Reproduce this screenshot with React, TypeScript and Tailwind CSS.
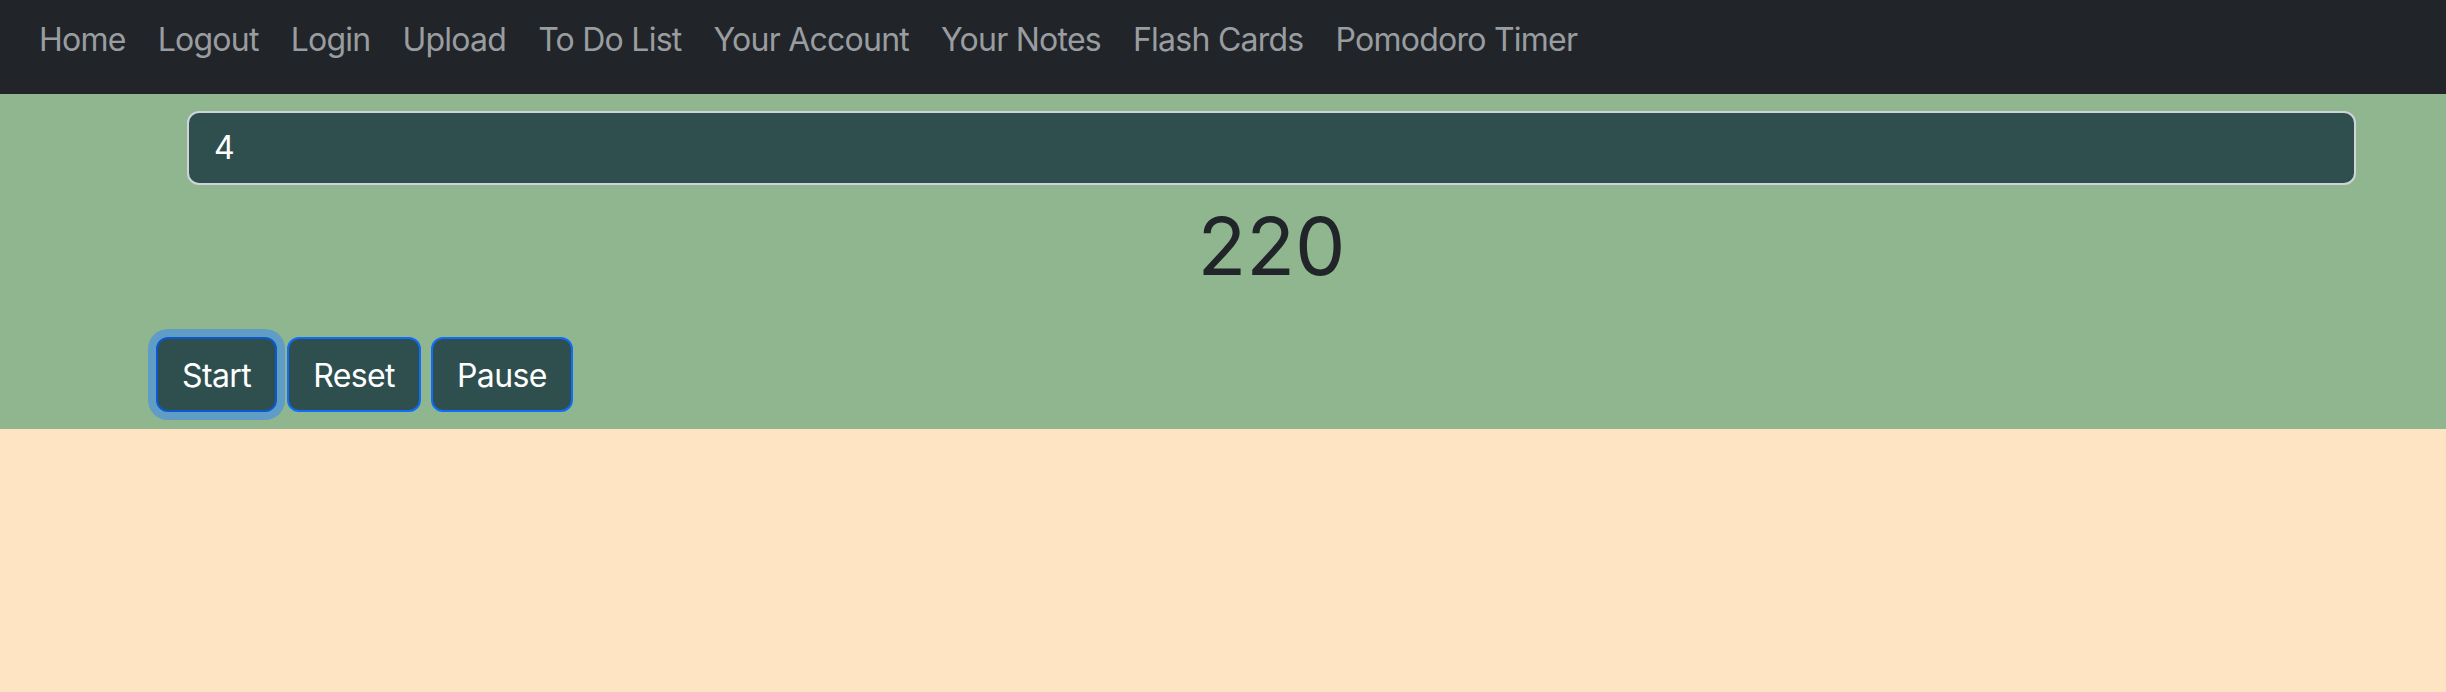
import React from "react";

const links = ["Home", "Logout", "Login", "Upload", "To Do List", "Your Account", "Your Notes", "Flash Cards", "Pomodoro Timer"];

export default function App() {
  return (
    <div className="min-h-[692px] bg-[#ffe4c4]" style={{ fontFamily: "Inter, 'Noto Sans', sans-serif" }}>
      {/* navbar */}
      <nav className="flex h-[94px] items-start bg-[#212529] pl-[23px] pt-[16px]">
        {links.map((l) => (
          <a key={l} className="px-[16px] text-[32px] leading-[48px] tracking-[-0.75px] text-[#9a9da0]">
            {l}
          </a>
        ))}
      </nav>

      {/* timer */}
      <div className="flex flex-col bg-[#8fb68e] pb-[17px] pt-[17px]">
        <div className="ml-[187px] flex h-[74px] w-[2169px] items-center rounded-[12px] border-2 border-[#ced4da] bg-[#2f4f4f] px-[25px] text-[32px] text-white">
          4
        </div>
        <div className="ml-[187px] mt-[13px] w-[2169px] text-center text-[80px] leading-[96px] text-[#212529]">220</div>
        <div className="ml-[156px] mt-[43px] flex gap-[9px]">
          <button className="h-[75px] rounded-[12px] border-2 border-[#0a58ca] bg-[#2f4f4f] px-[24px] pt-[2px] text-[32px] tracking-[-0.6px] text-white shadow-[0_0_0_8px_rgba(49,132,253,0.5)]">
            Start
          </button>
          <button className="ml-[1px] h-[75px] rounded-[12px] border-2 border-[#0d6efd] bg-[#2f4f4f] px-[24px] pt-[2px] text-[32px] tracking-[-0.6px] text-white">
            Reset
          </button>
          <button className="ml-[1px] h-[75px] rounded-[12px] border-2 border-[#0d6efd] bg-[#2f4f4f] px-[24px] pt-[2px] text-[32px] tracking-[-0.6px] text-white">
            Pause
          </button>
        </div>
      </div>
    </div>
  );
}
